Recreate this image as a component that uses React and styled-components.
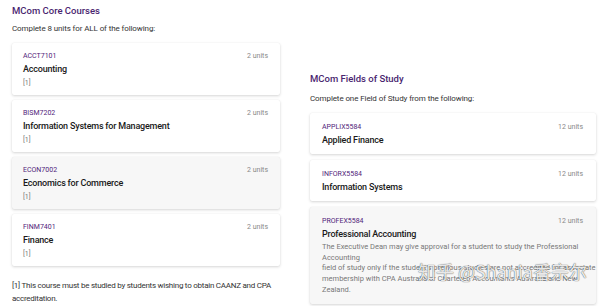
import React from 'react';
import styled, { createGlobalStyle } from 'styled-components';

const GlobalStyle = createGlobalStyle`
  body {
    margin: 0;
    background: #ffffff;
    font-family: Roboto, 'Noto Sans', 'Liberation Sans', sans-serif;
    color: #222;
  }
`;

const coreCourses = [
  { code: 'ACCT7101', title: 'Accounting', units: '2 units' },
  { code: 'BISM7202', title: 'Information Systems for Management', units: '2 units' },
  { code: 'ECON7002', title: 'Economics for Commerce', units: '2 units', hover: true },
  { code: 'FINM7401', title: 'Finance', units: '2 units' },
];

const fields = [
  { code: 'APPLIX5584', title: 'Applied Finance', units: '12 units' },
  { code: 'INFORX5584', title: 'Information Systems', units: '12 units' },
  {
    code: 'PROFEX5584',
    title: 'Professional Accounting',
    units: '12 units',
    hover: true,
    note: [
      'The Executive Dean may give approval for a student to study the Professional',
      'Accounting',
      "field of study only if the student's previous studies are not accredited for associate",
      'membership with CPA Australia or Chartered Accountants Australia and New',
      'Zealand.',
    ],
  },
];

function App() {
  return (
    <>
      <GlobalStyle />
      <Page>
        <Column width={268} top={4}>
          <Heading>MCom Core Courses</Heading>
          <Intro>Complete 8 units for ALL of the following:</Intro>
          <CardList gap={5}>
            {coreCourses.map((item) => (
              <Card key={item.code} hover={item.hover}>
                <CardTop>
                  <Code>{item.code}</Code>
                  <Units>{item.units}</Units>
                </CardTop>
                <Title>{item.title}</Title>
                <Ref>[1]</Ref>
              </Card>
            ))}
          </CardList>
          <Footnote>
            [1] This course must be studied by students wishing to obtain CAANZ and CPA
            accreditation.
          </Footnote>
        </Column>

        <Column width={286} top={72}>
          <Heading>MCom Fields of Study</Heading>
          <Intro wide>Complete one Field of Study from the following:</Intro>
          <CardList gap={6}>
            {fields.map((item) => (
              <Card key={item.code} hover={item.hover} wide>
                <CardTop>
                  <Code>{item.code}</Code>
                  <Units>{item.units}</Units>
                </CardTop>
                <Title>{item.title}</Title>
                {item.note && (
                  <Note>
                    {item.note.map((line) => (
                      <div key={line}>{line}</div>
                    ))}
                  </Note>
                )}
              </Card>
            ))}
          </CardList>
        </Column>

        <Watermark>知乎 @Shania香宗尔</Watermark>
      </Page>
    </>
  );
}

export default App;

const Page = styled.div`
  position: relative;
  display: flex;
  align-items: flex-start;
  gap: 30px;
  padding-left: 12px;
  height: 306px;
  overflow: hidden;
`;

const Column = styled.div`
  width: ${(p) => p.width}px;
  padding-top: ${(p) => p.top}px;
  display: flex;
  flex-direction: column;
`;

const Heading = styled.div`
  font-size: 9.5px;
  line-height: 13px;
  font-weight: 500;
  color: #49256f;
`;

const Intro = styled.div`
  margin-top: ${(p) => (p.wide ? 8 : 6)}px;
  font-size: 8px;
  line-height: 12px;
  letter-spacing: -0.1px;
  color: #333;
`;

const CardList = styled.div`
  margin-top: 8px;
  display: flex;
  flex-direction: column;
  gap: ${(p) => p.gap}px;
`;

const Card = styled.div`
  padding: ${(p) => (p.wide ? '9px 12px 8px' : '8px 11px 7px')};
  background: ${(p) => (p.hover ? '#f7f7f7' : '#ffffff')};
  border-radius: 2px;
  box-shadow: 0 1px 3px rgba(0, 0, 0, 0.16), 0 0 1px rgba(0, 0, 0, 0.08);
`;

const CardTop = styled.div`
  display: flex;
  justify-content: space-between;
  align-items: center;
  line-height: 10px;
`;

const Code = styled.span`
  font-size: 7px;
  color: #51247a;
`;

const Units = styled.span`
  font-size: 7px;
  color: #888;
  margin-right: 1px;
`;

const Title = styled.div`
  margin-top: 2px;
  font-size: 9px;
  line-height: 12px;
  font-weight: 500;
  letter-spacing: -0.2px;
  color: #1a1a1a;
`;

const Ref = styled.div`
  margin-top: 3px;
  font-size: 7px;
  line-height: 10px;
  color: #777;
`;

const Note = styled.div`
  margin-top: 2px;
  font-size: 7.5px;
  line-height: 10.7px;
  color: #777;
  white-space: nowrap;
`;

const Footnote = styled.div`
  margin-top: 13px;
  font-size: 8px;
  line-height: 13px;
  letter-spacing: -0.25px;
  color: #333;
`;

const Watermark = styled.div`
  position: absolute;
  left: 418px;
  top: 261px;
  font-size: 18px;
  line-height: 20px;
  color: rgba(255, 255, 255, 0.9);
  font-family: 'Noto Sans CJK SC', 'Noto Sans', sans-serif;
  text-shadow: 0 0 1px rgba(0, 0, 0, 0.6), 0 0 1px rgba(0, 0, 0, 0.4);
  white-space: nowrap;
`;
